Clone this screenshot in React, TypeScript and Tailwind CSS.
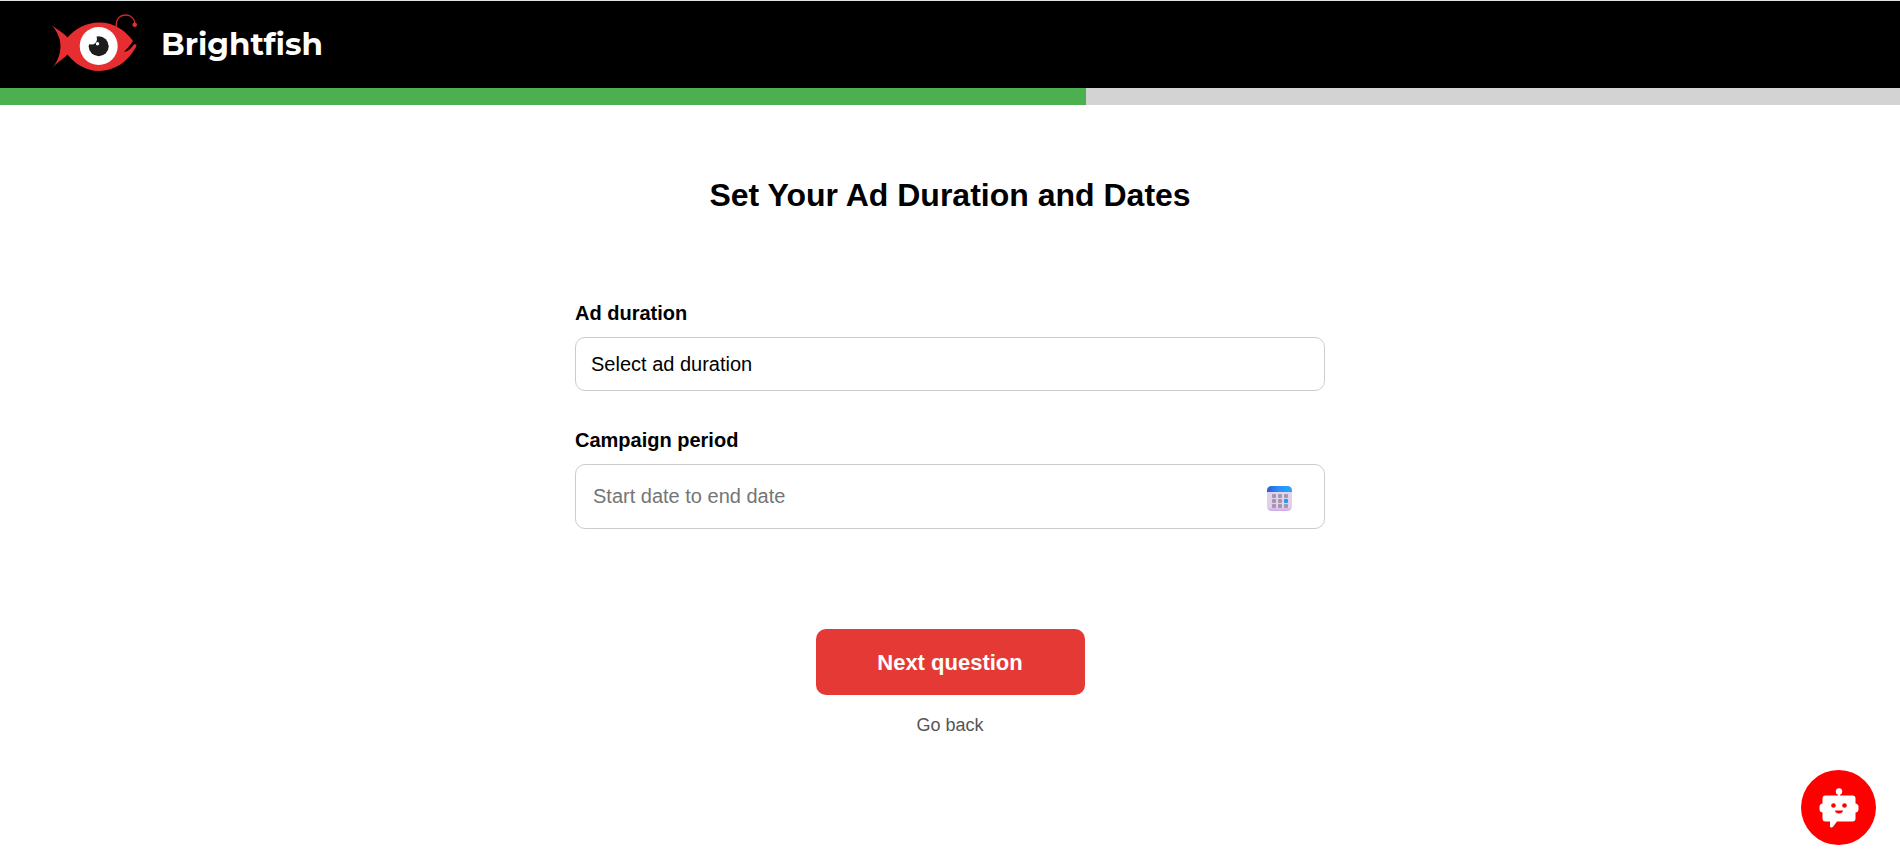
function Logo() {
  return (
    <svg width="90" height="66" viewBox="51 11 90 66" aria-hidden="true">
      <path
        d="M52 24 C57 29 63 31 67.500 36.500 C75 28 86 21.500 99 21.500 C114 21.500 125 29 133 40 C131 44 127 47 124 51 C129 50 131 47 134 43.500 C136 42.500 137 44 136 46 C128 61 114 70 99 70 C86 70 75 63 67.500 53.500 C62 59 57 61 52 67.500 C57 61 60.500 54 60.500 45 C60.500 37 57 31 52 24 Z"
        fill="#e62e31"
      />
      <path d="M116.500 27 C115 18 120 14 126 14 C131 14 135 18 135 23" fill="none" stroke="#c9292c" strokeWidth="1.400" />
      <circle cx="134.700" cy="23.700" r="2.300" fill="#e62e31" />
      <circle cx="98.700" cy="45" r="19" fill="#fff" />
      <circle cx="98.700" cy="45.300" r="10" fill="#1d1d1b" />
      <circle cx="91.500" cy="38" r="5.500" fill="#fff" />
      <circle cx="97.500" cy="42.800" r="1.700" fill="#fff" />
    </svg>
  );
}

function Calendar() {
  return (
    <svg width="25" height="25" viewBox="0 0 25 25" aria-hidden="true">
      <defs>
        <linearGradient id="calendarTop" x1="0" x2="1">
          <stop offset="0" stopColor="#2a5fd8" />
          <stop offset="0.5" stopColor="#2e90f5" />
          <stop offset="1" stopColor="#22a8ff" />
        </linearGradient>
        <linearGradient id="calendarPage" x1="0" y1="0" x2="0" y2="1">
          <stop offset="0" stopColor="#dfd6ea" />
          <stop offset="0.85" stopColor="#e0cfee" />
          <stop offset="1" stopColor="#cfa8e8" />
        </linearGradient>
      </defs>
      <rect width="25" height="25" rx="4.500" fill="url(#calendarPage)" />
      <path d="M0 6V4.500A4.500 4.500 0 0 1 4.500 0h16A4.500 4.500 0 0 1 25 4.500V6Z" fill="url(#calendarTop)" />
      {[8, 13, 18].map((y) =>
        [5, 11, 17].map((x) => (
          <rect
            key={`${x}-${y}`}
            x={x}
            y={y}
            width="4"
            height="4"
            rx="1"
            fill={x === 17 && y === 13 ? "#2b95f0" : "#a596ae"}
          />
        )),
      )}
    </svg>
  );
}

function Robot() {
  return (
    <svg width="40" height="40" viewBox="0 0 40 40" aria-hidden="true">
      <circle cx="20" cy="3.500" r="3.200" fill="#fff" />
      <path d="M19 5h2v5h-2z" fill="#fff" />
      <rect x="0.500" y="15.500" width="39" height="9" rx="3.500" fill="#fff" />
      <path
        d="M6.500 7.500h27a3 3 0 0 1 3 3v20a3 3 0 0 1-3 3H18l-4 5.200c-1 1.300-3 1-3-.5V33.500H6.500a3 3 0 0 1-3-3V10.500a3 3 0 0 1 3-3Z"
        fill="#fff"
      />
      <circle cx="14.500" cy="17.500" r="2.300" fill="#f00" />
      <circle cx="25.500" cy="17.500" r="2.300" fill="#f00" />
      <path d="M16 22.500h8c0 4-8 4-8 0Z" fill="#f00" />
    </svg>
  );
}

export default function App() {
  return (
    <div className="flex min-h-screen flex-col bg-white font-['Liberation_Sans',Arial,sans-serif] text-black">
      <header className="flex h-22 items-center gap-5 border-t border-[#dfe3e3] bg-black px-[51px]">
        <Logo />
        <span className="font-['Montserrat','Open_Sans',sans-serif] text-[31px] font-bold text-white">
          Brightfish
        </span>
      </header>
      <div
        className="h-[17px] bg-[#d3d3d3]"
        role="progressbar"
        aria-label="Progress"
        aria-valuemin={0}
        aria-valuemax={7}
        aria-valuenow={4}
      >
        <div className="h-full w-4/7 bg-[#4caf50]" />
      </div>

      <main className="flex flex-col items-center px-6 pt-[70px] pb-10">
        <h1 className="text-[32px] leading-10 font-bold">Set Your Ad Duration and Dates</h1>
        <form className="mt-[86px] flex w-full max-w-[750px] flex-col" onSubmit={(e) => e.preventDefault()}>
          <label htmlFor="duration" className="text-xl leading-6 font-bold">
            Ad duration
          </label>
          <select
            id="duration"
            className="mt-3 h-[54px] w-full appearance-none rounded-[10px] border border-[#ccc] bg-white px-[15px] text-xl"
          >
            <option>Select ad duration</option>
          </select>
          <label htmlFor="period" className="mt-[37px] text-xl leading-6 font-bold">
            Campaign period
          </label>
          <div className="mt-3 flex h-[65px] items-center rounded-[10px] border border-[#ccc] pr-8 pl-[17px]">
            <input
              id="period"
              type="text"
              placeholder="Start date to end date"
              className="h-full min-w-0 flex-1 bg-transparent text-xl outline-none placeholder:text-[#757575]"
            />
            <button type="button" aria-label="Open calendar" className="pt-1">
              <Calendar />
            </button>
          </div>
          <button
            type="submit"
            className="mt-[100px] h-[66px] w-[269px] self-center rounded-[10px] bg-[#e53935] text-[22px] font-bold text-white"
          >
            Next question
          </button>
        </form>
        <a href="#" className="mt-[18px] text-lg leading-6 text-[#555]">
          Go back
        </a>
      </main>

      <button
        type="button"
        aria-label="Open chat"
        className="fixed right-6 bottom-[23px] flex size-[75px] items-center justify-center rounded-full bg-[#f00]"
      >
        <Robot />
      </button>
    </div>
  );
}
